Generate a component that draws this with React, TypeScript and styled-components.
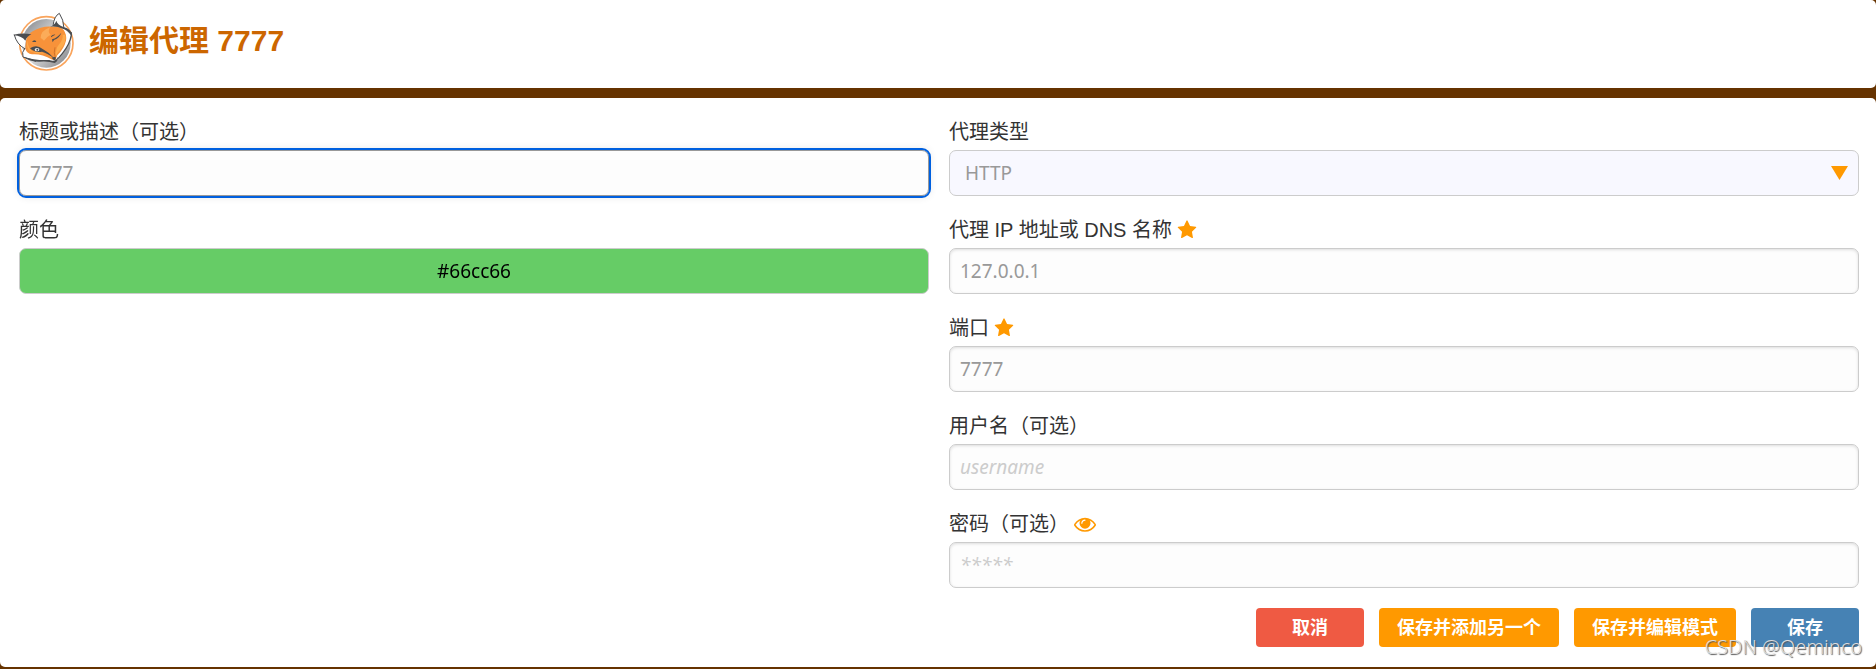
import React from "react";
import styled, { createGlobalStyle } from "styled-components";

const uiFont = `"Liberation Sans", "Noto Sans CJK SC", sans-serif`;
const inputFont = `"Noto Sans", "Noto Sans CJK SC", sans-serif`;

const GlobalStyle = createGlobalStyle`
  *, *::before, *::after { box-sizing: border-box; }
  body {
    margin: 0;
    background: #663300;
    color: #333;
    font: 20px/28px ${uiFont};
  }
`;

const Page = styled.div`
  position: relative;
  display: flex;
  flex-direction: column;
  gap: 10px;
`;

const Header = styled.header`
  display: flex;
  align-items: flex-start;
  gap: 13px;
  padding: 12px 12px 16px;
  border-radius: 5px;
  background: #fff;
`;

const Title = styled.h1`
  margin: 0;
  color: #cc6600;
  font-size: 30px;
  line-height: 58px;
  font-weight: 700;
`;

const Card = styled.form`
  padding: 20px 17px 20px 19px;
  border-radius: 5px;
  background: #fff;
`;

const Columns = styled.div`
  display: grid;
  grid-template-columns: 1fr 1fr;
  gap: 20px;
`;

const Column = styled.div`
  display: flex;
  flex-direction: column;
  gap: 20px;
`;

const FieldBox = styled.div`
  display: flex;
  flex-direction: column;
  gap: 4px;
`;

const LabelRow = styled.div`
  display: flex;
  align-items: center;
  gap: 5px;
  height: 28px;
`;

const RevealButton = styled.button`
  display: flex;
  padding: 0;
  border: 0;
  background: none;
  cursor: pointer;
`;

const TextInput = styled.input<{ $swatch?: string }>`
  width: 100%;
  height: 46px;
  padding: 0 10px;
  border: 1px solid #ccc;
  border-radius: 7px;
  background: ${(p) => p.$swatch ?? "#fdfdfd"};
  box-shadow: ${(p) => (p.$swatch ? "none" : "inset 0 1px 3px #ddd")};
  color: ${(p) => (p.$swatch ? "#000" : "#999")};
  text-align: ${(p) => (p.$swatch ? "center" : "left")};
  font: 19px/28px ${inputFont};

  &::placeholder {
    color: #ccc;
    font-style: italic;
    opacity: 1;
  }
  &:focus {
    outline: 2px solid #0060df;
    outline-offset: 0;
    border-color: #999;
    box-shadow: 0 0 8px #ddd;
  }
`;

const SelectBox = styled.div`
  position: relative;
`;

const Select = styled.select`
  appearance: none;
  display: block;
  width: 100%;
  height: 46px;
  padding: 0 40px 0 15px;
  border: 1px solid #ccc;
  border-radius: 7px;
  background: #f8f8ff;
  color: #999;
  font: 19px/28px ${inputFont};
`;

const Arrow = styled.svg`
  position: absolute;
  top: 16px;
  right: 11px;
  pointer-events: none;
`;

const Actions = styled.div`
  display: flex;
  justify-content: flex-end;
  gap: 15px;
  margin-top: 20px;
`;

const tones = { danger: "#ef5a43", accent: "#ff9900", primary: "#4682b4" };

const ActionButton = styled.button<{ $tone: keyof typeof tones }>`
  min-width: 108px;
  height: 39px;
  padding: 0 18px;
  border: 0;
  border-radius: 4px;
  background: ${(p) => tones[p.$tone]};
  color: #fff;
  font: 700 18px/28px ${uiFont};
  cursor: pointer;
`;

const Watermark = styled.span`
  position: absolute;
  right: 14px;
  bottom: 6px;
  color: #ddd;
  font: 300 20px/28px ${inputFont};
  text-shadow: 1px 1px 1px #555;
  pointer-events: none;
`;

function FoxLogo() {
  return (
    <svg width="64" height="60" viewBox="36 36 192 180" aria-hidden="true">
      <defs>
        <linearGradient id="disc" x1="0" y1="0" x2="1" y2="1">
          <stop offset="0" stopColor="#77787c" />
          <stop offset="0.2" stopColor="#a3a5a8" />
          <stop offset="0.5" stopColor="#dcddde" />
          <stop offset="1" stopColor="#77787c" />
        </linearGradient>
      </defs>
      <circle cx="139" cy="130" r="80" fill="#fff" stroke="#f9a45c" strokeWidth="5" />
      <circle cx="139" cy="130" r="73" fill="url(#disc)" />
      <path d="M42 105 Q66 98 94 104 L78 120 L73 146 Q50 133 42 105Z" fill="#fff" />
      <path d="M157 82 Q160 54 178 40 Q190 62 192 88Z" fill="#fff" />
      <path d="M75 145 Q64 156 69 171 Q105 186 155 183 Q166 188 174 178 Q210 140 214 100 Q206 88 190 82Z" fill="#fff" />
      <path d="M78 122 Q82 103 98 94 Q124 78 155 80 Q182 78 191 90 Q201 104 198 122 Q192 146 172 166 L166 180 L157 179 Q122 160 96 163 Q80 160 76 146Z" fill="#f7923a" />
      <path d="M122 114 Q122 92 150 82 Q142 98 152 104 Q140 110 132 122 Q126 116 122 114Z" fill="#fbac59" />
      <path d="M196 104 Q200 126 182 148 Q172 158 167 170 Q166 146 178 132 Q190 118 188 104Z" fill="#fdab4c" />
      <path d="M82 122 Q78 140 88 152 Q106 162 132 160 Q150 166 160 176 Q130 152 100 156 Q84 146 82 122Z" fill="#fdab4c" />
      <path d="M43 105 Q50 133 74 146" fill="none" stroke="#4b4d50" strokeWidth="3" strokeLinecap="round" />
      <path d="M41 104 Q68 98 94 103 Q80 110 76 122 Q66 108 41 106Z" fill="#4b4d50" />
      <path d="M159 78 Q162 48 178 40 Q191 58 192 86" fill="none" stroke="#4b4d50" strokeWidth="3" />
      <path d="M150 80 Q164 76 169 62 Q172 74 192 82 Q208 86 215 98 L213 106 Q200 88 188 86 Q172 78 150 80Z" fill="#4b4d50" />
      <path d="M213 97 Q216 104 211 118 Q203 144 174 176" fill="none" stroke="#4b4d50" strokeWidth="4" />
      <path d="M75 145 Q64 156 69 171 Q95 178 108 184" fill="none" stroke="#4b4d50" strokeWidth="3" />
      <path d="M69 170 Q105 182 148 180 Q166 187 174 171 Q175 183 164 189 Q146 183 118 185 Q88 185 69 170Z" fill="#4b4d50" />
      <path d="M90 145 Q110 132 128 147 Q146 156 164 176 Q142 160 126 155 Q106 160 90 145Z" fill="#4b4d50" />
      <ellipse cx="111" cy="149" rx="7" ry="5" fill="#eee" />
      <circle cx="112" cy="149" r="3" fill="#4b4d50" />
      <path d="M156 118 Q172 113 184 98 Q180 112 162 120 L158 127Z" fill="#4b4d50" />
      <path d="M153 109 Q158 103 166 104 Q158 107 153 112Z" fill="#4b4d50" />
      <path d="M96 126 Q101 118 107 122 L109 126Z" fill="#4b4d50" />
      <path d="M155 173 Q162 170 168 172 L166 181 Q160 181 155 173Z" fill="#4b4d50" />
      <path d="M166 172 Q160 158 165 142" fill="none" stroke="#b96221" strokeWidth="2" />
    </svg>
  );
}

function StarIcon() {
  return (
    <svg width="20" height="20" viewBox="0 0 1792 1792" fill="#ff9900" aria-hidden="true">
      <path d="M1728 647q0 22-26 48l-363 354 86 500q1 7 1 20 0 21-10.5 35.5t-30.5 14.5q-19 0-40-12l-449-236-449 236q-22 12-40 12-21 0-31.5-14.5t-10.5-35.5q0-6 2-20l86-500-364-354q-25-27-25-48 0-37 56-46l502-73 225-455q19-41 49-41t49 41l225 455 502 73q56 9 56 46z" />
    </svg>
  );
}

function EyeIcon() {
  return (
    <svg width="22" height="22" viewBox="0 0 1792 1792" fill="#ff9900" aria-hidden="true">
      <path d="M1664 960q-152-236-381-353 61 104 61 225 0 185-131.5 316.5t-316.5 131.5-316.5-131.5-131.5-316.5q0-121 61-225-229 117-381 353 133 205 333.5 326.5t434.5 121.5 434.5-121.5 333.5-326.5zm-720-384q0-20-14-34t-34-14q-125 0-214.5 89.5t-89.5 214.5q0 20 14 34t34 14 34-14 14-34q0-86 61-147t147-61q20 0 34-14t14-34zm848 384q0 34-20 69-140 230-376.5 368.5t-499.5 138.5-499.5-139-376.5-368q-20-35-20-69t20-69q140-229 376.5-368t499.5-139 499.5 139 376.5 368q20 35 20 69z" />
    </svg>
  );
}

type FieldProps = {
  id: string;
  label: string;
  required?: boolean;
  extra?: React.ReactNode;
  children: React.ReactNode;
};

function Field({ id, label, required, extra, children }: FieldProps) {
  return (
    <FieldBox>
      <LabelRow>
        <label htmlFor={id}>{label}</label>
        {required && <StarIcon />}
        {extra}
      </LabelRow>
      {children}
    </FieldBox>
  );
}

export default function App() {
  const [showPassword, setShowPassword] = React.useState(false);
  return (
    <>
      <GlobalStyle />
      <Page>
        <Header>
          <FoxLogo />
          <Title>编辑代理 7777</Title>
        </Header>
        <Card onSubmit={(e) => e.preventDefault()}>
          <Columns>
            <Column>
              <Field id="title" label="标题或描述（可选）">
                <TextInput id="title" defaultValue="7777" autoFocus />
              </Field>
              <Field id="color" label="颜色">
                <TextInput id="color" defaultValue="#66cc66" $swatch="#66cc66" />
              </Field>
            </Column>
            <Column>
              <Field id="type" label="代理类型">
                <SelectBox>
                  <Select id="type" defaultValue="http">
                    <option value="http">HTTP</option>
                  </Select>
                  <Arrow width="17" height="14" viewBox="0 0 17 14" aria-hidden="true">
                    <path d="M0 0H17L8.5 14Z" fill="#ff9900" />
                  </Arrow>
                </SelectBox>
              </Field>
              <Field id="address" label="代理 IP 地址或 DNS 名称" required>
                <TextInput id="address" defaultValue="127.0.0.1" />
              </Field>
              <Field id="port" label="端口" required>
                <TextInput id="port" defaultValue="7777" />
              </Field>
              <Field id="username" label="用户名（可选）">
                <TextInput id="username" placeholder="username" />
              </Field>
              <Field
                id="password"
                label="密码（可选）"
                extra={
                  <RevealButton
                    type="button"
                    aria-label="显示密码"
                    onClick={() => setShowPassword(!showPassword)}
                  >
                    <EyeIcon />
                  </RevealButton>
                }
              >
                <TextInput
                  id="password"
                  type={showPassword ? "text" : "password"}
                  placeholder="*****"
                />
              </Field>
            </Column>
          </Columns>
          <Actions>
            <ActionButton type="button" $tone="danger">取消</ActionButton>
            <ActionButton type="button" $tone="accent">保存并添加另一个</ActionButton>
            <ActionButton type="button" $tone="accent">保存并编辑模式</ActionButton>
            <ActionButton type="submit" $tone="primary">保存</ActionButton>
          </Actions>
        </Card>
        <Watermark>CSDN @Qeminco</Watermark>
      </Page>
    </>
  );
}
